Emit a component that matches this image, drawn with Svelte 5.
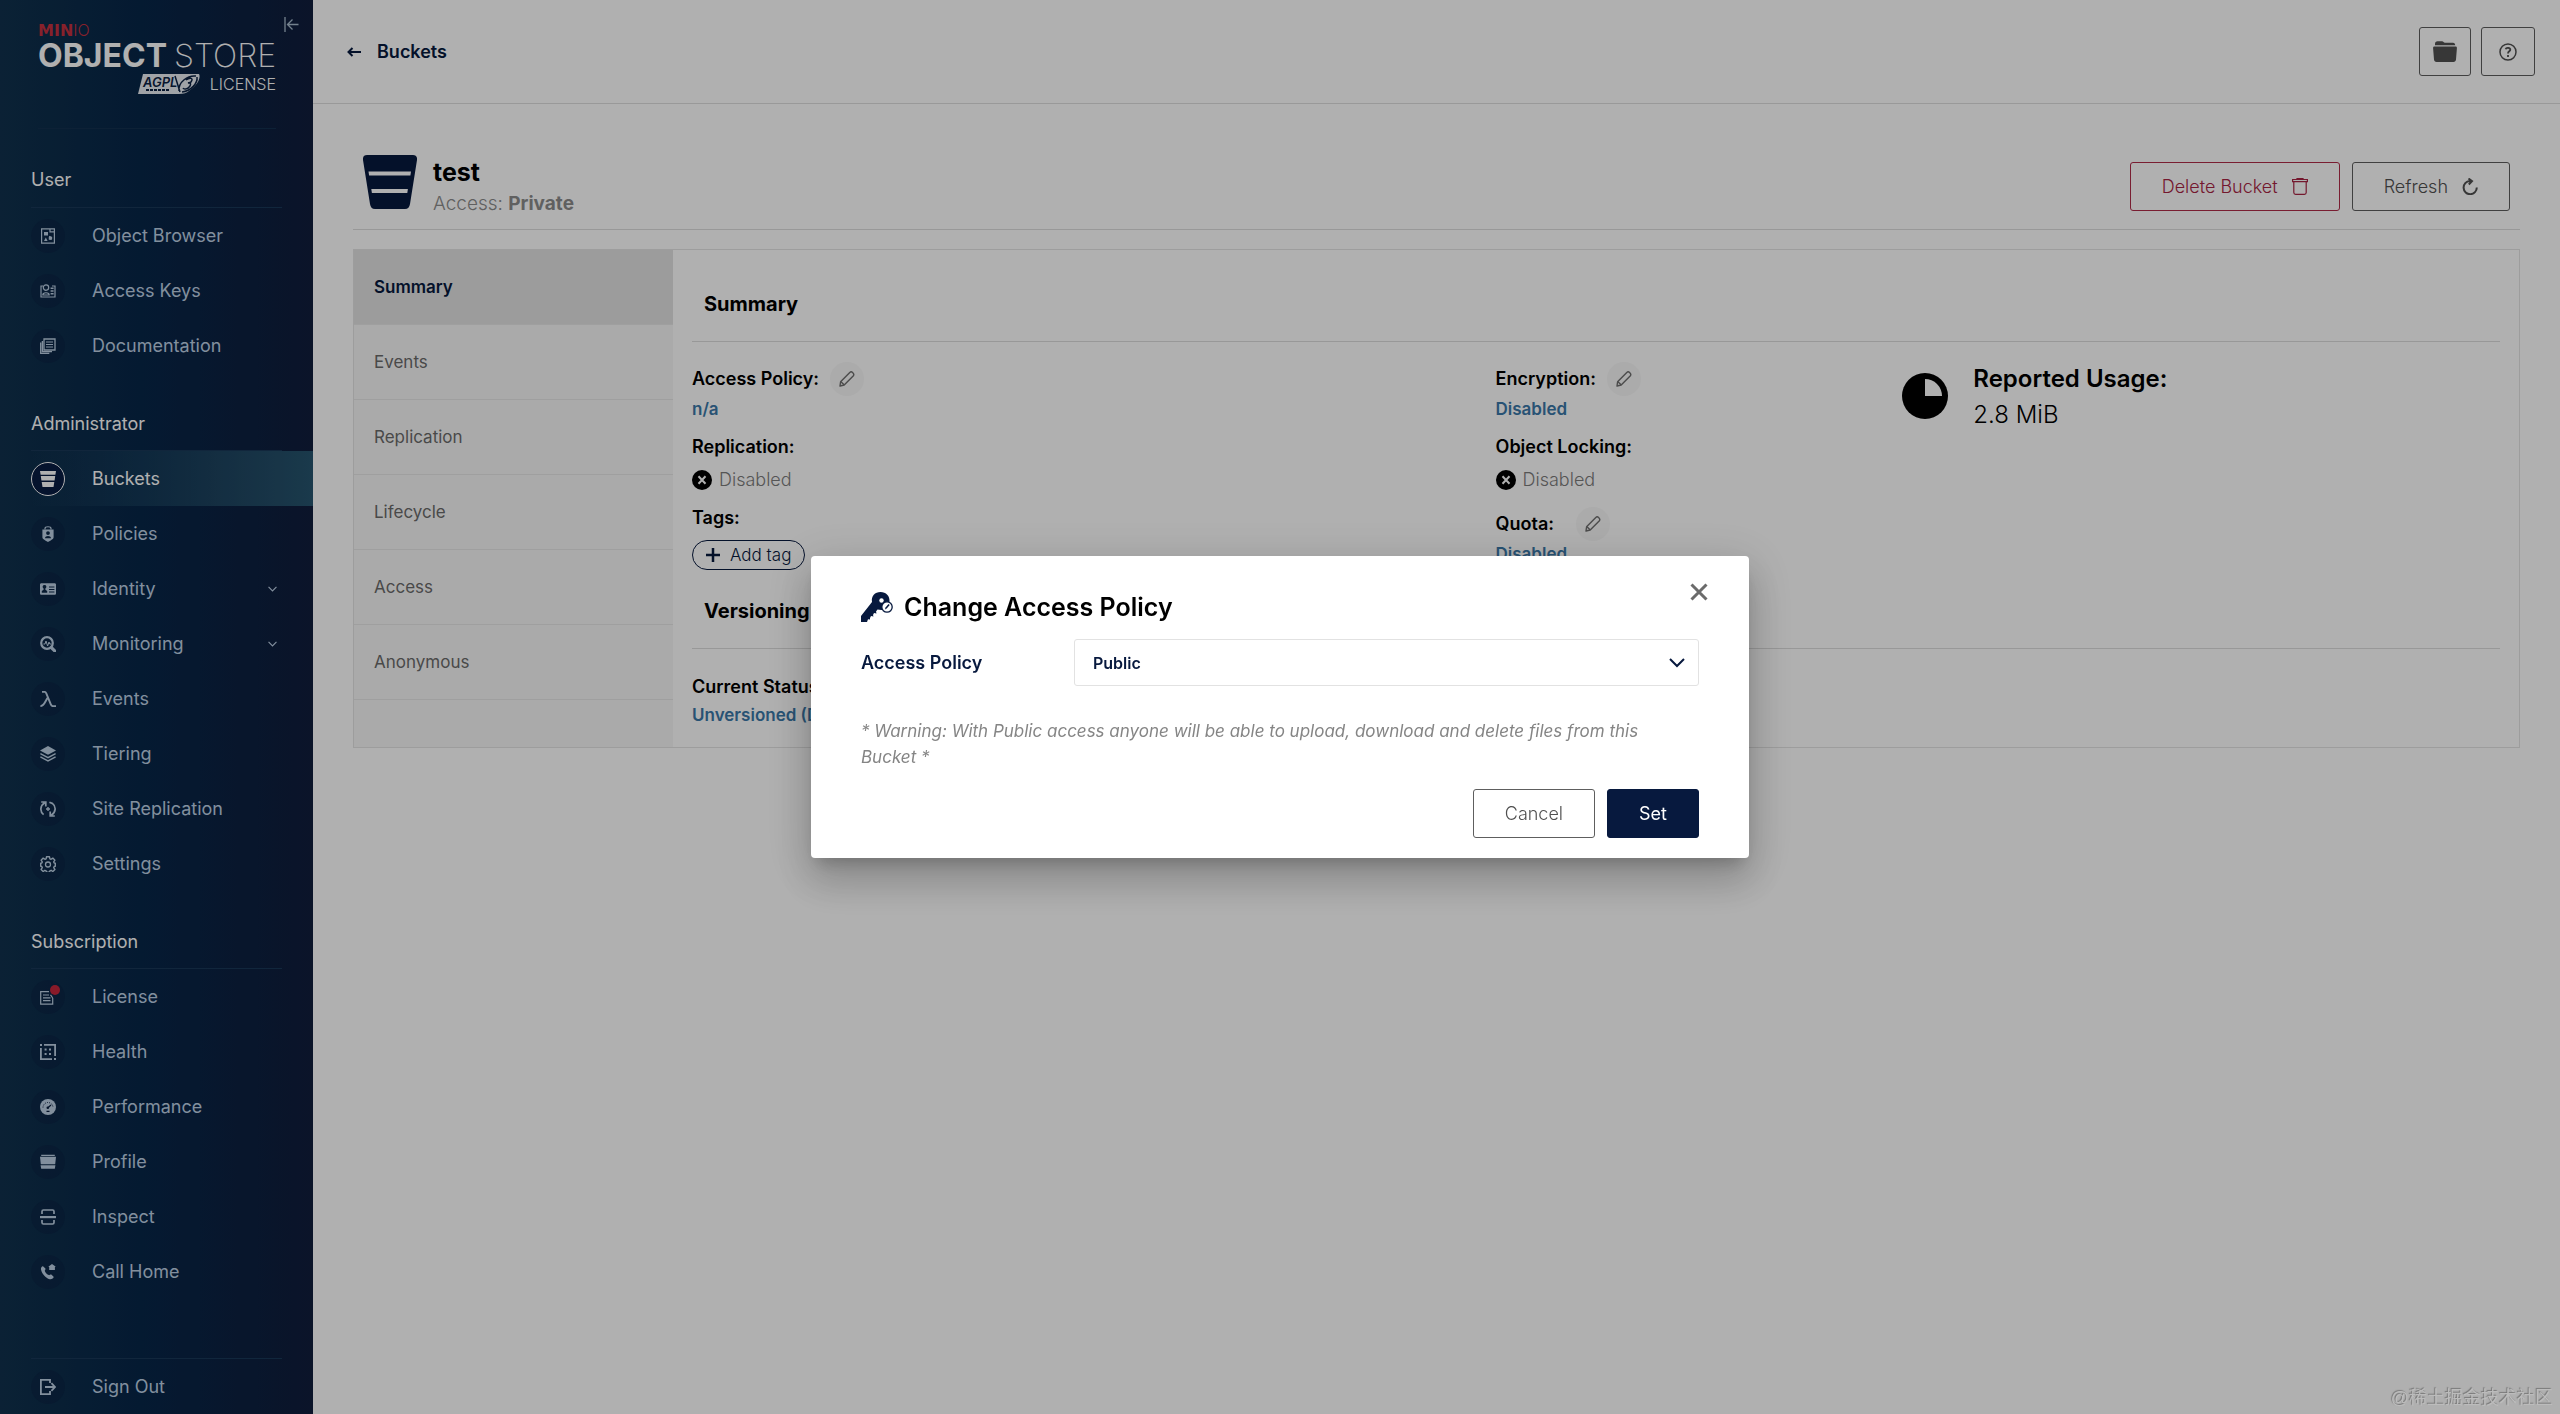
<script lang="ts">
  interface NavItem {
    label: string;
    icon: string;
    active?: boolean;
    expandable?: boolean;
    badge?: boolean;
  }

  interface NavGroup {
    title: string;
    items: NavItem[];
  }

  const groups: NavGroup[] = [
    {
      title: 'User',
      items: [
        { label: 'Object Browser', icon: 'browser' },
        { label: 'Access Keys', icon: 'keys' },
        { label: 'Documentation', icon: 'docs' },
      ],
    },
    {
      title: 'Administrator',
      items: [
        { label: 'Buckets', icon: 'bucket', active: true },
        { label: 'Policies', icon: 'policies' },
        { label: 'Identity', icon: 'identity', expandable: true },
        { label: 'Monitoring', icon: 'monitoring', expandable: true },
        { label: 'Events', icon: 'lambda' },
        { label: 'Tiering', icon: 'tiering' },
        { label: 'Site Replication', icon: 'replication' },
        { label: 'Settings', icon: 'settings' },
      ],
    },
    {
      title: 'Subscription',
      items: [
        { label: 'License', icon: 'license', badge: true },
        { label: 'Health', icon: 'health' },
        { label: 'Performance', icon: 'performance' },
        { label: 'Profile', icon: 'profile' },
        { label: 'Inspect', icon: 'inspect' },
        { label: 'Call Home', icon: 'call' },
      ],
    },
  ];

  const tabs = ['Summary', 'Events', 'Replication', 'Lifecycle', 'Access', 'Anonymous'];

  let currentTab = $state('Summary');
  let policy = $state('Public');
  let modalOpen = $state(true);

  function closeModal() {
    modalOpen = false;
  }
</script>

{#snippet navIcon(name: string)}
  <svg class="nav-icon" viewBox="0 0 16 16" fill="currentColor" aria-hidden="true">
    {#if name === 'browser'}
      <path fill="none" stroke="currentColor" stroke-width="1.2" d="M1.6.8h12.8v14.4H1.6z M10 .8v3h4.4" />
      <path d="M4 4h4v3.6H4zM9.4 7.8l2.4 1.6v2.4H8.8V9zM4 13l1.8-3.4L7.6 13z" />
      <circle cx="10.6" cy="10" r="1.7" />
    {:else if name === 'keys'}
      <path fill="none" stroke="currentColor" stroke-width="1.2" d="M3 3H1v11h14V3h-3" />
      <circle cx="6" cy="4.6" r="2.7" fill="none" stroke="currentColor" stroke-width="1.2" />
      <path fill="none" stroke="currentColor" stroke-width="1.2" d="M2.8 12c0-3 6.4-3 6.4 0z" />
      <path d="M10.6 4.5h3v1.6h-3zM10.6 7.2h3v1.6h-3zM10.6 10h3v1.6h-3z" />
    {:else if name === 'docs'}
      <path fill="none" stroke="currentColor" stroke-width="1.3" d="M4 1h11v11H4zM2.4 3v10.6H12M.7 4.5v10.8h8.6" />
      <path d="M6 3.4h7v1.2H6zM6 5.9h7v1.2H6zM6 8.4h7v1.2H6z" />
    {:else if name === 'bucket'}
      <path d="M0 0h16l-.6 3.8H.6zM.8 5h14.4l-.6 4.6H1.4zM1.7 10.9h12.6L13.5 16h-11z" />
    {:else if name === 'policies'}
      <path fill="none" stroke="currentColor" stroke-width="1.2" d="M5 3.5V2.4C5 .2 11 .2 11 2.4v1.1" />
      <path fill-rule="evenodd" d="M2.4 3.6h11.2v7.6c0 2.2-3.4 3.2-5.6 4.8-2.2-1.6-5.6-2.6-5.6-4.8zM8 5.2a1.9 1.9 0 1 0 0 3.8 1.9 1.9 0 0 0 0-3.8zM5 12.2h6c0-3-6-3-6 0z" />
    {:else if name === 'identity'}
      <path fill-rule="evenodd" d="M1.4 2.2h13.2c.8 0 1.4.6 1.4 1.4v8.8c0 .8-.6 1.4-1.4 1.4H1.4c-.8 0-1.4-.6-1.4-1.4V3.6c0-.8.6-1.4 1.4-1.4zM4.5 4a1.8 1.8 0 0 0-.9 3.4v1.4L1.8 10v1.8h5.4V10L5.4 8.8V7.4A1.8 1.8 0 0 0 4.5 4zM9 5.4v1h5.4v-1zM9 8v1h5.4V8zM9 10.6v1h5.4v-1z" />
    {:else if name === 'monitoring'}
      <circle cx="7" cy="7" r="5.8" fill="none" stroke="currentColor" stroke-width="2.2" />
      <path fill="none" stroke="currentColor" stroke-width="1" d="M3.4 8h1.6l1-3 1.6 5L9 6l.8 2h1.6" />
      <path d="M9.2 11.8l2.4-2.4 4.4 4.6v2h-2.4z" />
    {:else if name === 'lambda'}
      <path fill="none" stroke="currentColor" stroke-width="1.9" d="M2 .9h2.6c1 0 1.4.7 1.9 1.9l4.3 10.6c.5 1.2 1 1.7 2 1.7H16M8 6.4C5.4 9.4 4.4 15.1.4 15.1" />
    {:else if name === 'tiering'}
      <path d="M8 0l8 4.6-8 4.2-8-4.2z" />
      <path fill="none" stroke="currentColor" stroke-width="1.4" d="M.4 7.6L8 11.6l7.6-4M.4 10.9L8 14.9l7.6-4" />
    {:else if name === 'replication'}
      <path fill="none" stroke="currentColor" stroke-width="1.7" d="M3.6 13.6C-.4 10.6 0 4.6 4.8 1.8M1.2 1h4.6v4.6M12.4 2.4c4 3 3.6 9-1.2 11.8M14.8 15h-4.6v-4.6M9.4 1.2l3.4 1.4" />
      <path d="M7.3 6h1.4v1.3H10v1.4H8.7V10H7.3V8.7H6V7.3h1.3z" />
    {:else if name === 'settings'}
      <path fill="none" stroke="currentColor" stroke-width="1.4" stroke-linejoin="round" d="M6.5.8h3l.4 2 1.2.5 1.7-1.2 2.1 2.1-1.2 1.7.5 1.2 1.1.2v3l-1.1.2-.5 1.2 1.2 1.7-2.1 2.1-1.7-1.2-1.2.5-.4 1.4h-3l-.4-1.4-1.2-.5-1.7 1.2-2.1-2.1 1.2-1.7-.5-1.2-1.1-.2v-3l1.1-.2.5-1.2-1.2-1.7 2.1-2.1 1.7 1.2 1.2-.5z" />
      <circle cx="8" cy="8.5" r="2.5" fill="none" stroke="currentColor" stroke-width="1.3" />
    {:else if name === 'license'}
      <path fill="none" stroke="currentColor" stroke-width="1.2" d="M9 2.6H.7v12.6h12V9M12.7 9l-2.2-3.2" />
      <path d="M3 5.4h6v1.2H3zM3 8.2h7.5v1.2H3zM3 11h7.5v1.2H3z" />
    {:else if name === 'health'}
      <path fill="none" stroke="currentColor" stroke-width="1.8" d="M4 .9h11.1V12M12 15.1H.9V4" />
      <path d="M0 0h2v2H0zM14 14h2v2h-2zM4.6 4.6h2v2h-2zM9 4.6h2v2H9zM4.6 9h2v2h-2zM9 9h2v2H9z" />
    {:else if name === 'performance'}
      <circle cx="8" cy="8" r="8" />
      <path fill="none" stroke="#081c3c" stroke-width="1" stroke-dasharray="1 1.2" d="M3 8.5a5 5 0 0 1 10 0" />
      <path fill="none" stroke="#081c3c" stroke-width="1.2" d="M7.6 9l3.4-3M6.5 12.4h3" />
      <circle cx="7.8" cy="8.8" r="1.3" fill="#081c3c" />
    {:else if name === 'profile'}
      <path d="M1.2.8h13.6V2H1.2zM0 2.8h16l-.8 7.4H.8zM.6 11.2h14.8l-.6 3.6H1.2z" />
    {:else if name === 'inspect'}
      <path d="M0 7h16v2.2H0z" />
      <path fill="none" stroke="currentColor" stroke-width="1.7" d="M2 5V2.4Q2 1 3.4 1h9.2Q14 1 14 2.4V5M2 11v2.6Q2 15 3.4 15h9.2q1.4 0 1.4-1.4V11" />
    {:else if name === 'call'}
      <path d="M3 2.2l2.4 2.4c.4 1-.9 1.7-.6 2.5.5 1.6 2.4 3.5 4 4 .8.3 1.5-1 2.5-.6l2.3 2.3c.3 1.7-2.3 2.9-3.9 2.4C5.3 14 1.9 9.6 1 5.6.7 4 1.6 2 3 2.2z" />
      <path d="M12 0l3.8 2.8-.9.3V6H9.2V3.1l-.9-.3z" />
    {:else if name === 'signout'}
      <path fill="none" stroke="currentColor" stroke-width="1.8" d="M10 4V.9H.9v14.2H10V12M5 8h10M11.4 4.2L15 8l-3.6 3.8" />
    {/if}
  </svg>
{/snippet}

{#snippet pencil(label: string)}
  <button class="edit" type="button" aria-label={label}>
    <svg viewBox="0 0 16 16" width="16" height="16" fill="none" stroke="currentColor" stroke-width="1.4" stroke-linejoin="round" aria-hidden="true">
      <path d="M1 15l.6-4.2L10.8 1.4c1.8-1.6 5 1.2 3.6 3.4L5.2 14zM2 10.8l3 3" />
    </svg>
  </button>
{/snippet}

{#snippet disabledStatus()}
  <div class="status">
    <svg viewBox="0 0 20 20" width="20" height="20" aria-hidden="true">
      <circle cx="10" cy="10" r="10" />
      <path d="M6.5 6.2l7 7.6M13.5 6.2l-7 7.6" stroke="#fff" stroke-width="2" />
    </svg>
    <span>Disabled</span>
  </div>
{/snippet}

<div class="app">
  <aside class="sidebar">
    <div class="brand">
      <button class="collapse" type="button" aria-label="Collapse menu">
        <svg viewBox="0 0 15 15" width="15" height="15" fill="none" stroke="currentColor" stroke-width="1.3" aria-hidden="true">
          <path d="M1 0v15M14.5 7.5H3.5M8.5 2.5l-5 5 5 5" />
        </svg>
      </button>
      <div class="brand-minio"><b>MIN</b><span>IO</span></div>
      <div class="brand-name"><b>OBJECT</b> <span>STORE</span></div>
      <div class="brand-license">
        <svg viewBox="0 0 62 20" width="62" height="20" aria-hidden="true">
          <path d="M5 0h56c2 3-1 11-9 16-3 3-7 4-11 4H0z" fill="#e8ecf2" />
          <text x="5" y="13" class="agpl">AGPL</text>
          <path d="M37 2l5 16M41 17C40 8 50 1 58 2M44 18c9-1 16-9 15-15M48 6c4-3 8-2 5 2-2 1-3 1-3 1s4-1 2 3c-2 3-6 4-7 2" fill="none" stroke="#0b2142" stroke-width="1.5" />
          <path d="M8 16h23" stroke="#0b2142" stroke-width="2" stroke-dasharray="3 1" />
        </svg>
        <span>LICENSE</span>
      </div>
    </div>

    <nav class="menu">
      {#each groups as group}
        <h2 class="group-title">{group.title}</h2>
        {#each group.items as item}
          <a class="nav-item" class:active={item.active} href="#{item.icon}">
            <span class="nav-badge">
              {@render navIcon(item.icon)}
              {#if item.badge}<span class="dot"></span>{/if}
            </span>
            <span>{item.label}</span>
            {#if item.expandable}
              <svg class="caret" viewBox="0 0 10 6" width="9" height="6" fill="none" stroke="currentColor" stroke-width="1.3" aria-hidden="true">
                <path d="M.6.6L5 5 9.4.6" />
              </svg>
            {/if}
          </a>
        {/each}
      {/each}
    </nav>

    <div class="signout">
      <a class="nav-item" href="#signout">
        <span class="nav-badge">{@render navIcon('signout')}</span>
        <span>Sign Out</span>
      </a>
    </div>
  </aside>

  <main class="main">
    <header class="topbar">
      <a class="back" href="#buckets">
        <svg viewBox="0 0 14 10" width="14" height="10" fill="none" stroke="currentColor" stroke-width="2" aria-hidden="true">
          <path d="M14 5H2M5.5 1l-4 4 4 4" />
        </svg>
        Buckets
      </a>
      <div class="actions">
        <button class="btn folder" type="button" aria-label="Object browser">
          <svg viewBox="0 0 24 21" width="24" height="21" fill="currentColor" aria-hidden="true">
            <path d="M2 3C2 1 3 .2 4.5.2H9c1.5 0 1.5 1.6 3 1.6h8c1.5 0 2.2 1 2.2 2.4H2z" />
            <path d="M1.5 5.6h21c1 0 1.5.6 1.4 1.6L23 18.5c-.2 1.5-1 2.5-2.6 2.5H3.6C2 21 1.2 20 1 18.5L.1 7.2c-.1-1 .4-1.6 1.4-1.6z" />
          </svg>
        </button>
        <button class="btn help" type="button" aria-label="Help">
          <svg viewBox="0 0 18 18" width="18" height="18" fill="none" stroke="currentColor" stroke-width="1.5" aria-hidden="true">
            <circle cx="9" cy="9" r="8" />
            <path stroke-width="1.8" d="M6.6 6.3c.6-2.2 5-1.8 4.7.6-.2 1.5-2.3 1.4-2.3 3.5M9 12v2" />
          </svg>
        </button>
      </div>
    </header>

    <div class="page">
      <section class="bucket-header">
        <div class="bucket-title">
          <svg viewBox="0 0 54 54" width="54" height="54" aria-hidden="true">
            <path fill="#07193e" d="M4 0h46c3 0 4.5 2 4 5l-7 44c-.5 3-2 5-5 5H12c-3 0-4.5-2-5-5L0 5C-.4 2 1 0 4 0z" />
            <path fill="#fff" d="M5.5 16.5H48l-.6 4H6.1zM8.3 34h36.6l-.6 4H8.900z" />
          </svg>
          <div>
            <h1>test</h1>
            <p>Access: <b>Private</b></p>
          </div>
        </div>
        <div class="actions wide">
          <button class="btn danger" type="button">
            Delete Bucket
            <svg viewBox="0 0 16 17" width="16" height="17" fill="none" stroke="currentColor" stroke-width="1.2" aria-hidden="true">
              <path d="M.6 1.5h14.8v2.2H.6zM1.8 3.7v10.8q0 1.8 1.8 1.8h8.8q1.8 0 1.8-1.8V3.7M5 1.2V.6h6v.6" />
            </svg>
          </button>
          <button class="btn" type="button">
            Refresh
            <svg viewBox="0 0 16 17" width="16" height="17" fill="none" stroke="currentColor" stroke-width="2" aria-hidden="true">
              <path d="M9 3H7.8a6.6 6.6 0 1 0 7 6.5M6.5.5L10 3.2 6.8 6.5" />
            </svg>
          </button>
        </div>
      </section>

      <section class="panel">
        <div class="tabs" role="tablist">
          {#each tabs as tab}
            <button
              class="tab"
              class:selected={tab === currentTab}
              type="button"
              role="tab"
              aria-selected={tab === currentTab}
              onclick={() => (currentTab = tab)}
            >
              {tab}
            </button>
          {/each}
        </div>

        <div class="content">
          <h2 class="section-title first">Summary</h2>
          <div class="summary">
            <div class="column">
              <div>
                <div class="label editable">Access Policy: {@render pencil('Edit access policy')}</div>
                <a class="value" href="#policy">n/a</a>
              </div>
              <div>
                <div class="label">Replication:</div>
                {@render disabledStatus()}
              </div>
              <div>
                <div class="label">Tags:</div>
                <button class="tag" type="button">
                  <svg viewBox="0 0 14 14" width="14" height="14" stroke="currentColor" stroke-width="2.5" aria-hidden="true">
                    <path d="M7 0v14M0 7h14" />
                  </svg>
                  Add tag
                </button>
              </div>
            </div>

            <div class="column">
              <div>
                <div class="label editable">Encryption: {@render pencil('Edit encryption')}</div>
                <a class="value" href="#encryption">Disabled</a>
              </div>
              <div>
                <div class="label">Object Locking:</div>
                {@render disabledStatus()}
              </div>
              <div>
                <div class="label editable quota">Quota: {@render pencil('Edit quota')}</div>
                <a class="value" href="#quota">Disabled</a>
              </div>
            </div>

            <div class="usage">
              <svg viewBox="0 0 46 46" width="46" height="46" aria-hidden="true">
                <circle cx="23" cy="23" r="23" />
                <path d="M23 6a17 17 0 0 1 17 17H23z" fill="#fff" />
              </svg>
              <div>
                <h3>Reported Usage:</h3>
                <p>2.8 MiB</p>
              </div>
            </div>
          </div>

          <h2 class="section-title">Versioning</h2>
          <div class="versioning">
            <div class="label">Current Status:</div>
            <a class="value" href="#versioning">Unversioned (Default)</a>
          </div>
        </div>
      </section>
    </div>
  </main>
</div>

{#if modalOpen}
  <div class="backdrop">
    <div class="modal" role="dialog" aria-modal="true" aria-labelledby="modal-title">
      <button class="close" type="button" aria-label="Close" onclick={closeModal}>
        <svg viewBox="0 0 18 18" width="18" height="18" stroke="currentColor" stroke-width="3" aria-hidden="true">
          <path d="M1.5 1.5l15 15M16.5 1.5l-15 15" />
        </svg>
      </button>
      <h2 id="modal-title">
        <svg viewBox="0 0 32 30" width="32" height="30" aria-hidden="true">
          <path fill="#07193e" d="M11 10C10 4 14 0 19.5 0S29 4 28.5 9.5c0 3.5-3 8-8 8.5l-4-.5-1.5 2 .5 2-2.5-.5-1 2 .5 1.5-2.5-.5-1 2v1.5l-2-.2L6 30H0v-6z" />
          <circle cx="20.5" cy="8.5" r="2.2" fill="#fff" />
          <circle cx="26" cy="15" r="5.2" fill="#fff" stroke="#07193e" stroke-width="1.3" />
          <path d="M24 17.5l.5-2 3-3.5 1.2 1-3 3.5z" fill="#07193e" />
        </svg>
        Change Access Policy
      </h2>
      <div class="field">
        <label for="access-policy">Access Policy</label>
        <div class="select-wrap">
          <select id="access-policy" bind:value={policy}>
            <option>Private</option>
            <option>Public</option>
            <option>Custom</option>
          </select>
          <svg viewBox="0 0 16 10" width="16" height="10" fill="none" stroke="currentColor" stroke-width="2" aria-hidden="true">
            <path d="M1 1l7 7 7-7" />
          </svg>
        </div>
      </div>
      {#if policy === 'Public'}
        <p class="warning">
          * Warning: With Public access anyone will be able to upload, download and delete files from this Bucket *
        </p>
      {/if}
      <div class="modal-actions">
        <button class="btn" type="button" onclick={closeModal}>Cancel</button>
        <button class="btn primary" type="button" onclick={closeModal}>Set</button>
      </div>
    </div>
  </div>
{/if}

<div class="watermark">@稀土掘金技术社区</div>

<style>
  :global(body) {
    margin: 0;
    background: #fff;
    color: #000;
    font-family: Inter, 'Liberation Sans', sans-serif;
    font-size: 18px;
    line-height: 24px;
  }

  :global(*) {
    box-sizing: border-box;
  }

  h1,
  h2,
  h3,
  p {
    margin: 0;
  }

  a {
    text-decoration: none;
  }

  button,
  select {
    font: inherit;
    cursor: pointer;
  }

  svg {
    flex-shrink: 0;
  }

  .app {
    display: flex;
    min-height: 100vh;
  }

  /* sidebar */
  .sidebar {
    display: flex;
    flex-direction: column;
    flex: 0 0 313px;
    background: linear-gradient(90deg, #10314d 0%, #072648 45%, #101d3c 100%);
  }

  .brand {
    position: relative;
    margin: 0 37px 0 38px;
    padding: 22px 0 33px;
    border-bottom: 1px solid #14304f;
    color: #fff;
  }

  .collapse {
    position: absolute;
    top: 17px;
    right: -23px;
    display: flex;
    padding: 0;
    border: 0;
    background: none;
    color: #a9bccd;
  }

  .brand-minio {
    color: #c5303f;
    font-family: 'DejaVu Sans', sans-serif;
    font-size: 16px;
    line-height: 17px;
  }

  .brand-minio span {
    font-family: Inter, sans-serif;
    font-weight: 300;
  }

  .brand-name {
    display: flex;
    justify-content: space-between;
    font-size: 32px;
    line-height: 34px;
  }

  .brand-name span {
    font-weight: 200;
  }

  .brand-license {
    display: flex;
    align-items: center;
    justify-content: flex-end;
    gap: 10px;
    font-size: 16px;
    line-height: 22px;
    font-weight: 300;
  }

  .agpl {
    font-size: 13px;
    font-style: italic;
    font-weight: 600;
    fill: #0b2142;
  }

  .group-title {
    margin: 0 31px;
    padding: 41px 0 16px;
    border-bottom: 1px solid #1a3757;
    color: #fff;
    font-size: 18px;
    line-height: 20px;
    font-weight: 400;
  }

  .group-title:first-child {
    padding-bottom: 17px;
  }

  .nav-item {
    display: flex;
    align-items: center;
    height: 55px;
    padding: 0 36px 0 31px;
    gap: 27px;
    color: #bdd0e4;
  }

  .nav-item.active {
    background: linear-gradient(90deg, rgba(38, 84, 110, 0) 10%, #26546e 100%);
    color: #fff;
  }

  .nav-badge {
    position: relative;
    display: flex;
    align-items: center;
    justify-content: center;
    width: 34px;
    height: 34px;
    border: 1px solid transparent;
    border-radius: 50%;
    background: rgba(10, 26, 60, 0.3);
  }

  .active .nav-badge {
    border-color: #fff;
    background: #081c42;
  }

  .nav-icon {
    width: 16px;
    height: 16px;
  }

  .dot {
    position: absolute;
    top: 4px;
    right: 4px;
    width: 10px;
    height: 10px;
    border-radius: 50%;
    background: #c5263c;
  }

  .caret {
    margin-left: auto;
  }

  .signout {
    margin-top: auto;
  }

  .signout::before {
    content: '';
    display: block;
    margin: 0 31px;
    border-top: 1px solid #1a3757;
  }

  /* main */
  .main {
    flex: 1;
    min-width: 0;
  }

  .topbar {
    display: flex;
    align-items: center;
    justify-content: space-between;
    height: 104px;
    padding: 0 25px 0 34px;
    border-bottom: 1px solid #dedede;
  }

  .back {
    display: flex;
    align-items: center;
    gap: 16px;
    color: #07193e;
    font-weight: 600;
  }

  .actions {
    display: flex;
    gap: 10px;
  }

  .actions.wide {
    gap: 12px;
  }

  .btn {
    display: flex;
    align-items: center;
    justify-content: center;
    gap: 14px;
    height: 49px;
    padding: 0 31px;
    border: 1px solid #5e5e5e;
    border-radius: 3px;
    background: transparent;
    color: #505050;
    font-weight: 300;
  }

  .btn.folder {
    padding: 0 13px;
  }

  .btn.help {
    padding: 0 17px;
  }

  .btn.danger {
    border-color: #b02a48;
    color: #a82443;
  }

  .btn.primary {
    border-color: #07193e;
    background: #07193e;
    color: #fff;
    font-weight: 400;
  }

  .page {
    padding: 40px;
  }

  .bucket-header {
    display: flex;
    align-items: center;
    justify-content: space-between;
    height: 86px;
    padding: 0 10px;
    border-bottom: 1px solid #dcdcdc;
  }

  .bucket-title {
    display: flex;
    gap: 16px;
  }

  .bucket-title h1 {
    font-size: 25px;
    line-height: 34px;
    font-weight: 700;
  }

  .bucket-title p {
    color: #8c8c8c;
    font-size: 19px;
    line-height: 30px;
    font-weight: 300;
  }

  .bucket-title b {
    font-weight: 700;
  }

  .panel {
    display: flex;
    margin-top: 19px;
    border: 1px solid #e4e4e4;
  }

  .tabs {
    flex: 0 0 319px;
    background: #f7f7f7;
  }

  .tab {
    display: block;
    width: 100%;
    height: 75px;
    padding: 0 20px;
    border: 0;
    border-bottom: 1px solid #e6e6e6;
    background: none;
    color: #6b6b6b;
    text-align: left;
    font-size: 17px;
  }

  .tab.selected {
    background: #e3e3e3;
    color: #07193e;
    font-weight: 600;
  }

  .content {
    flex: 1;
    min-width: 0;
    padding: 0 19px 20px;
  }

  .section-title {
    padding: 27px 12px 23px;
    border-bottom: 1px solid #dcdcdc;
    font-size: 20px;
    line-height: 28px;
    font-weight: 700;
  }

  .section-title.first {
    padding-top: 40px;
  }

  .summary {
    display: grid;
    grid-template-columns: 4fr 2fr 3fr;
    padding-top: 19px;
  }

  .column {
    display: flex;
    flex-direction: column;
    gap: 14px;
  }

  .label {
    font-weight: 600;
  }

  .label.editable {
    display: flex;
    align-items: center;
    gap: 11px;
    height: 36px;
  }

  .label.quota {
    gap: 22px;
  }

  .edit {
    display: flex;
    align-items: center;
    justify-content: center;
    width: 34px;
    height: 34px;
    padding: 0;
    border: 0;
    border-radius: 50%;
    background: #f8f8f8;
    color: #6e6e6e;
  }

  .value {
    display: block;
    color: #3a78a8;
    font-size: 17px;
    font-weight: 600;
  }

  .status {
    display: flex;
    align-items: center;
    gap: 7px;
    margin-top: 9px;
    color: #7c7c7c;
    font-weight: 300;
  }

  .tag {
    display: flex;
    align-items: center;
    gap: 10px;
    height: 30px;
    margin-top: 10px;
    padding: 0 13px;
    border: 1px solid #07193e;
    border-radius: 15px;
    background: none;
    color: #07193e;
    font-size: 17px;
    font-weight: 300;
  }

  .usage {
    display: flex;
    gap: 25px;
    padding-left: 5px;
  }

  .usage svg {
    margin-top: 12px;
  }

  .usage h3 {
    font-size: 24px;
    line-height: 36px;
    font-weight: 600;
  }

  .usage p {
    font-size: 24px;
    line-height: 36px;
    font-weight: 300;
  }

  .versioning {
    padding-top: 26px;
  }

  .versioning .value {
    margin-top: 4px;
  }

  /* modal */
  .backdrop {
    position: fixed;
    inset: 0;
    display: flex;
    align-items: center;
    justify-content: center;
    background: rgba(0, 0, 0, 0.31);
  }

  .modal {
    position: relative;
    width: 100%;
    max-width: 938px;
    padding: 32px 50px 20px;
    border-radius: 4px;
    background: #fff;
    box-shadow:
      0 11px 15px -7px rgba(0, 0, 0, 0.2),
      0 24px 38px 3px rgba(0, 0, 0, 0.14),
      0 9px 46px 8px rgba(0, 0, 0, 0.12);
  }

  .close {
    position: absolute;
    top: 27px;
    right: 41px;
    display: flex;
    padding: 0;
    border: 0;
    background: none;
    color: #6b6b6b;
  }

  .modal h2 {
    display: flex;
    align-items: center;
    gap: 11px;
    font-size: 25px;
    line-height: 38px;
    font-weight: 600;
  }

  .field {
    display: flex;
    align-items: center;
    margin-top: 13px;
    color: #07193e;
  }

  .field label {
    flex: 0 0 213px;
    font-weight: 600;
  }

  .select-wrap {
    position: relative;
    flex: 1;
  }

  .select-wrap select {
    width: 100%;
    height: 47px;
    padding: 0 18px;
    border: 1px solid #e2e2e2;
    border-radius: 3px;
    appearance: none;
    background: #fff;
    color: #07193e;
    font-size: 16px;
    font-weight: 600;
  }

  .select-wrap svg {
    position: absolute;
    top: 19px;
    right: 14px;
    pointer-events: none;
  }

  .warning {
    margin-top: 32px;
    padding-right: 20px;
    color: #858585;
    font-size: 17px;
    font-style: italic;
    line-height: 26px;
  }

  .modal-actions {
    display: flex;
    justify-content: flex-end;
    gap: 12px;
    margin-top: 19px;
  }

  .watermark {
    position: fixed;
    right: 7px;
    bottom: 4px;
    color: #bcbcbc;
    font-family: 'Liberation Sans', 'Noto Sans CJK SC', sans-serif;
    text-shadow: -1px -1px 1px #777;
  }
</style>
